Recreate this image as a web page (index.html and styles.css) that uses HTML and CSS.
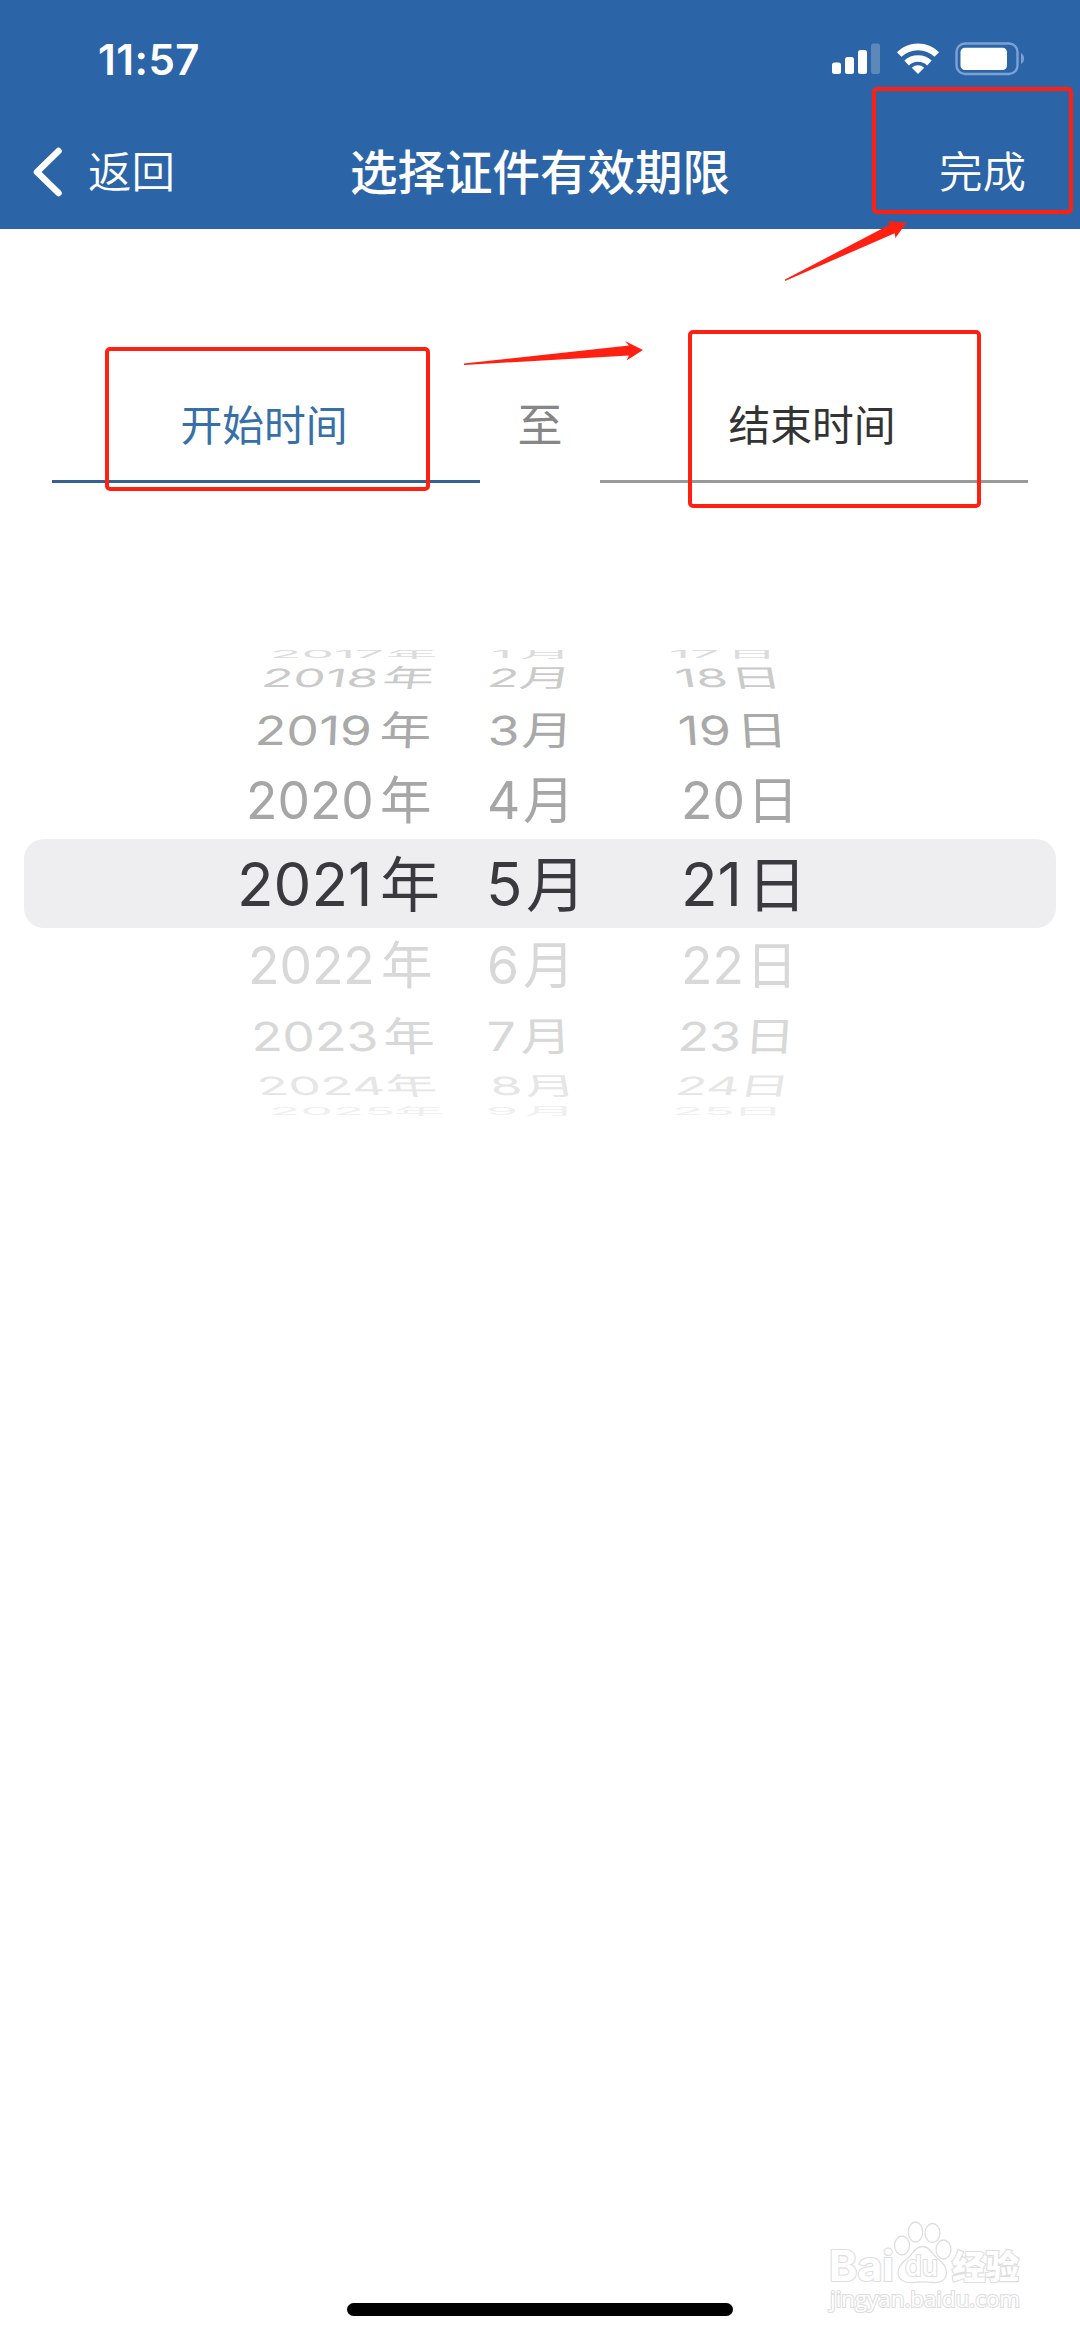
FILE: index.html
```html
<!DOCTYPE html>
<html lang="zh-CN">
<head>
  <meta charset="UTF-8">
  <meta name="viewport" content="width=device-width, initial-scale=1.0">
  <title>选择证件有效期限</title>
  <link rel="stylesheet" href="styles.css">
</head>
<body>
  <header class="header">
    <div class="status-bar">
      <span class="time">11:57</span>
      <svg class="status-icons" width="194" height="34" viewBox="831 42 194 34">
        <!-- signal -->
        <g fill="#fff">
          <rect x="832" y="62.5" width="9" height="11.5" rx="2.5"/>
          <rect x="845" y="57" width="9" height="17" rx="2.5"/>
          <rect x="858" y="50" width="9" height="24" rx="2.5"/>
          <rect x="871" y="43.5" width="9" height="30.5" rx="2.5" fill="#5d89ba"/>
        </g>
        <!-- wifi -->
        <g fill="none" stroke="#fff" stroke-width="6.6">
          <path d="M899.2 54.5 A27 27 0 0 1 936.8 54.5"/>
          <path d="M906.6 63 A16.5 16.5 0 0 1 929.4 63"/>
        </g>
        <path d="M918 74 L911.8 67.8 A9 9 0 0 1 924.2 67.8 Z" fill="#fff"/>
        <!-- battery -->
        <rect x="956.5" y="43.5" width="61" height="30.5" rx="8.5" fill="none" stroke="#7ba2d3" stroke-width="2.4"/>
        <rect x="960.5" y="47.7" width="46.5" height="22.3" rx="4.5" fill="#fff"/>
        <path d="M1021 53 Q1024 55 1024 58.5 Q1024 62 1021 64 Z" fill="#7ba2d3"/>
      </svg>
    </div>
    <nav class="nav-bar">
      <a class="back">
        <svg width="31" height="52" viewBox="0 0 31 52">
          <path d="M26.5 5 L5 26 L26.5 47" fill="none" stroke="#fff" stroke-width="6.5" stroke-linecap="round" stroke-linejoin="round"/>
        </svg>
        <span>返回</span>
      </a>
      <h1 class="title">选择证件有效期限</h1>
      <a class="done">完成</a>
    </nav>
  </header>

  <main>
    <div class="range">
      <div class="field active">开始时间</div>
      <div class="to">至</div>
      <div class="field">结束时间</div>
    </div>

    <div class="picker">
      <div class="row up4"><b>2017</b><i>年</i><b>1</b><i>月</i><b>17</b><i>日</i></div>
      <div class="row up3"><b>2018</b><i>年</i><b>2</b><i>月</i><b class="day">18</b><i class="day">日</i></div>
      <div class="row up2"><b>2019</b><i>年</i><b>3</b><i>月</i><b class="day">19</b><i class="day">日</i></div>
      <div class="row up1"><b>2020</b><i>年</i><b>4</b><i>月</i><b>20</b><i>日</i></div>
      <div class="row selected"><b>2021</b><i>年</i><b>5</b><i>月</i><b>21</b><i>日</i></div>
      <div class="row down1"><b>2022</b><i>年</i><b>6</b><i>月</i><b>22</b><i>日</i></div>
      <div class="row down2"><b>2023</b><i>年</i><b>7</b><i>月</i><b class="day">23</b><i class="day">日</i></div>
      <div class="row down3"><b>2024</b><i>年</i><b>8</b><i>月</i><b class="day">24</b><i class="day">日</i></div>
      <div class="row down4"><b>2025</b><i>年</i><b>9</b><i>月</i><b>25</b><i>日</i></div>
    </div>
  </main>

  <div class="home-indicator"></div>

  <!-- marks over the page -->
  <div class="mark mark-start"></div>
  <div class="mark mark-end"></div>
  <div class="mark mark-done"></div>
  <svg class="arrows" width="1080" height="400" viewBox="0 0 1080 400">
    <path d="M464 363.5 L629 345.5 L625 341 L643 350 L626.5 360.5 L629 355.5 L464 365 Z"/>
    <path d="M785 279.5 L890 224.5 L887.5 221 L906.5 222.7 L895.4 238 L894.7 233.3 L785 281 Z"/>
  </svg>

  <svg class="watermark" width="210" height="110" viewBox="820 2215 210 110">
    <g class="outline">
      <ellipse cx="902" cy="2245.5" rx="7.5" ry="9.5"/>
      <ellipse cx="915.5" cy="2232" rx="7.2" ry="10"/>
      <ellipse cx="932.5" cy="2233" rx="7.5" ry="9.5"/>
      <ellipse cx="943.5" cy="2249.5" rx="7.5" ry="9.5"/>
      <path d="M922.5 2246.5 C930 2246.5 932 2254 937 2258 C943 2262.5 947 2267 946.5 2273 C946 2280 940 2283.5 933 2282.5 C926 2281.5 920 2281.5 913 2282.5 C905 2283.5 898.5 2280 898 2273 C897.5 2267 902 2262.5 908 2258 C913 2254 915 2246.5 922.5 2246.5 Z"/>
      <text class="wm-bai" x="829" y="2281" textLength="65" lengthAdjust="spacingAndGlyphs">Bai</text>
      <text class="wm-du" x="905" y="2276" textLength="33" lengthAdjust="spacingAndGlyphs">du</text>
      <text class="wm-cn" x="952" y="2279" textLength="67" lengthAdjust="spacingAndGlyphs">经验</text>
      <text class="wm-url" x="830" y="2307" textLength="190" lengthAdjust="spacingAndGlyphs">jingyan.baidu.com</text>
    </g>
  </svg>
</body>
</html>
```

FILE: styles.css
```css
body {
  position: relative;
  display: flex;
  flex-direction: column;
  width: 1080px;
  height: 2337px;
  margin: 0;
  background-color: #fff;
  font-family: Inter, "Noto Sans CJK SC", sans-serif;
  overflow: hidden;
}
main {
  flex: 1;
}

/* header */
.header {
  box-sizing: border-box;
  height: 229px;
  background-color: #2c65a7;
  color: #fff;
}
.status-bar {
  display: flex;
  justify-content: space-between;
  align-items: center;
  height: 118px;
  padding: 0 55px 0 98px;
}
.time {
  font-size: 42px;
  font-weight: 600;
  letter-spacing: 0.5px;
}
.nav-bar {
  display: grid;
  grid-template-columns: 1fr auto 1fr;
  align-items: center;
  height: 102px;
  padding: 0 54px;
  font-family: "Noto Sans CJK SC", sans-serif;
  font-size: 43.5px;
}
.back {
  display: flex;
  align-items: center;
  gap: 25px;
  margin-left: -22px;
  font-weight: 350;
}
.back svg {
  margin-top: 6px;
}
.title {
  margin: 0;
  font-size: 47.5px;
  font-weight: 500;
}
.done {
  text-align: right;
  font-weight: 350;
}

/* start and end fields */
.range {
  display: flex;
  height: 254px;
  padding: 0 52px;
  font-family: "Noto Sans CJK SC", sans-serif;
}
.field,
.to {
  box-sizing: border-box;
  padding-top: 163px;
  line-height: 62px;
  text-align: center;
}
.field {
  width: 428px;
  padding-right: 4px;
  border-bottom: 3px solid #999;
  color: #333;
  font-size: 41.8px;
}
.field.active {
  border-color: #35608f;
  color: #376fa8;
}
.to {
  width: 120px;
  color: #868686;
  font-size: 45px;
}

/* date wheel */
.picker {
  margin: 167px 24px 0;
  overflow: hidden;
}
.row {
  display: grid;
  align-items: center;
  font-size: 51.5px;
  line-height: 0;
}
.row b,
.row i {
  font-weight: 400;
  font-style: normal;
  white-space: nowrap;
}
.row i {
  padding-bottom: 6px;
  font-family: "Noto Sans CJK SC", sans-serif;
}
.up4 {
  height: 8px;
  padding-left: 246px;
  grid-template-columns: 116px 105px 29px 149px 57px 1fr;
  color: #dcdcdc;
}
.up4 > * {
  transform: scaleY(0.2);
}
.up3 {
  height: 40px;
  padding-left: 238px;
  grid-template-columns: 121px 105px 32px 155px 55px 1fr;
  color: #cacaca;
}
.up3 > * {
  transform: scaleY(0.49) skewX(-5deg);
}
.up3 > .day {
  transform: scaleY(0.49) skewX(5deg);
}
.up2 {
  height: 63px;
  padding-left: 231px;
  grid-template-columns: 125px 108px 34px 156px 58px 1fr;
  color: #a9a9a9;
}
.up2 > * {
  transform: scaleY(0.78) skewX(-2deg);
}
.up2 > .day {
  transform: scaleY(0.78) skewX(3deg);
}
.up1 {
  height: 78px;
  padding-left: 222px;
  grid-template-columns: 134px 107px 36px 158px 66px 1fr;
  color: #a6a6a6;
}
.selected {
  height: 89px;
  padding-left: 213px;
  grid-template-columns: 143px 106px 40px 155px 66px 1fr;
  border-radius: 20px;
  background-color: #eeeef1;
  color: #3a393e;
  font-size: 60px;
}
.down1 {
  height: 73px;
  padding-left: 224px;
  grid-template-columns: 133px 106px 36px 158px 65px 1fr;
  color: #d8d8d8;
}
.down2 {
  height: 69px;
  padding-left: 227px;
  grid-template-columns: 132px 104px 33px 158px 66px 1fr;
  color: #d8d8d8;
}
.down2 > * {
  transform: scaleY(0.78) skewX(2deg);
}
.down2 > .day {
  transform: scaleY(0.78) skewX(-3deg);
}
.down3 {
  height: 32px;
  padding-left: 233px;
  grid-template-columns: 128px 105px 34px 152px 63px 1fr;
  color: #e6e6e6;
}
.down3 > * {
  transform: scaleY(0.49) skewX(5deg);
}
.down3 > .day {
  transform: scaleY(0.49) skewX(-5deg);
}
.down4 {
  height: 18px;
  padding-left: 245px;
  grid-template-columns: 124px 93px 38px 148px 60px 1fr;
  color: #efefef;
}
.down4 > * {
  transform: scaleY(0.2);
}

.home-indicator {
  width: 386px;
  height: 13px;
  margin: 0 auto 21px;
  border-radius: 7px;
  background-color: #000;
}

/* red marks */
.mark {
  position: absolute;
  box-sizing: border-box;
  border: 4px solid #ff2012;
  border-radius: 5px;
}
.mark-start {
  left: 105px;
  top: 347px;
  width: 325px;
  height: 144px;
}
.mark-end {
  left: 688px;
  top: 330px;
  width: 293px;
  height: 178px;
}
.mark-done {
  left: 872px;
  top: 87px;
  width: 201px;
  height: 127px;
}
.arrows {
  position: absolute;
  left: 0;
  top: 0;
  fill: #ff2012;
}

.watermark {
  position: absolute;
  left: 820px;
  top: 2215px;
}
.outline {
  fill: #fff;
  stroke: #dedede;
  stroke-width: 1.3;
}
.outline text {
  stroke-width: 2.2;
  paint-order: stroke;
}
.wm-bai {
  font: 700 42px Inter, sans-serif;
}
.wm-du {
  font: 500 29px Inter, sans-serif;
}
.wm-cn {
  font: 900 33px "Noto Sans CJK SC", sans-serif;
}
.wm-url {
  font: 400 22px "Open Sans", sans-serif;
}
```
